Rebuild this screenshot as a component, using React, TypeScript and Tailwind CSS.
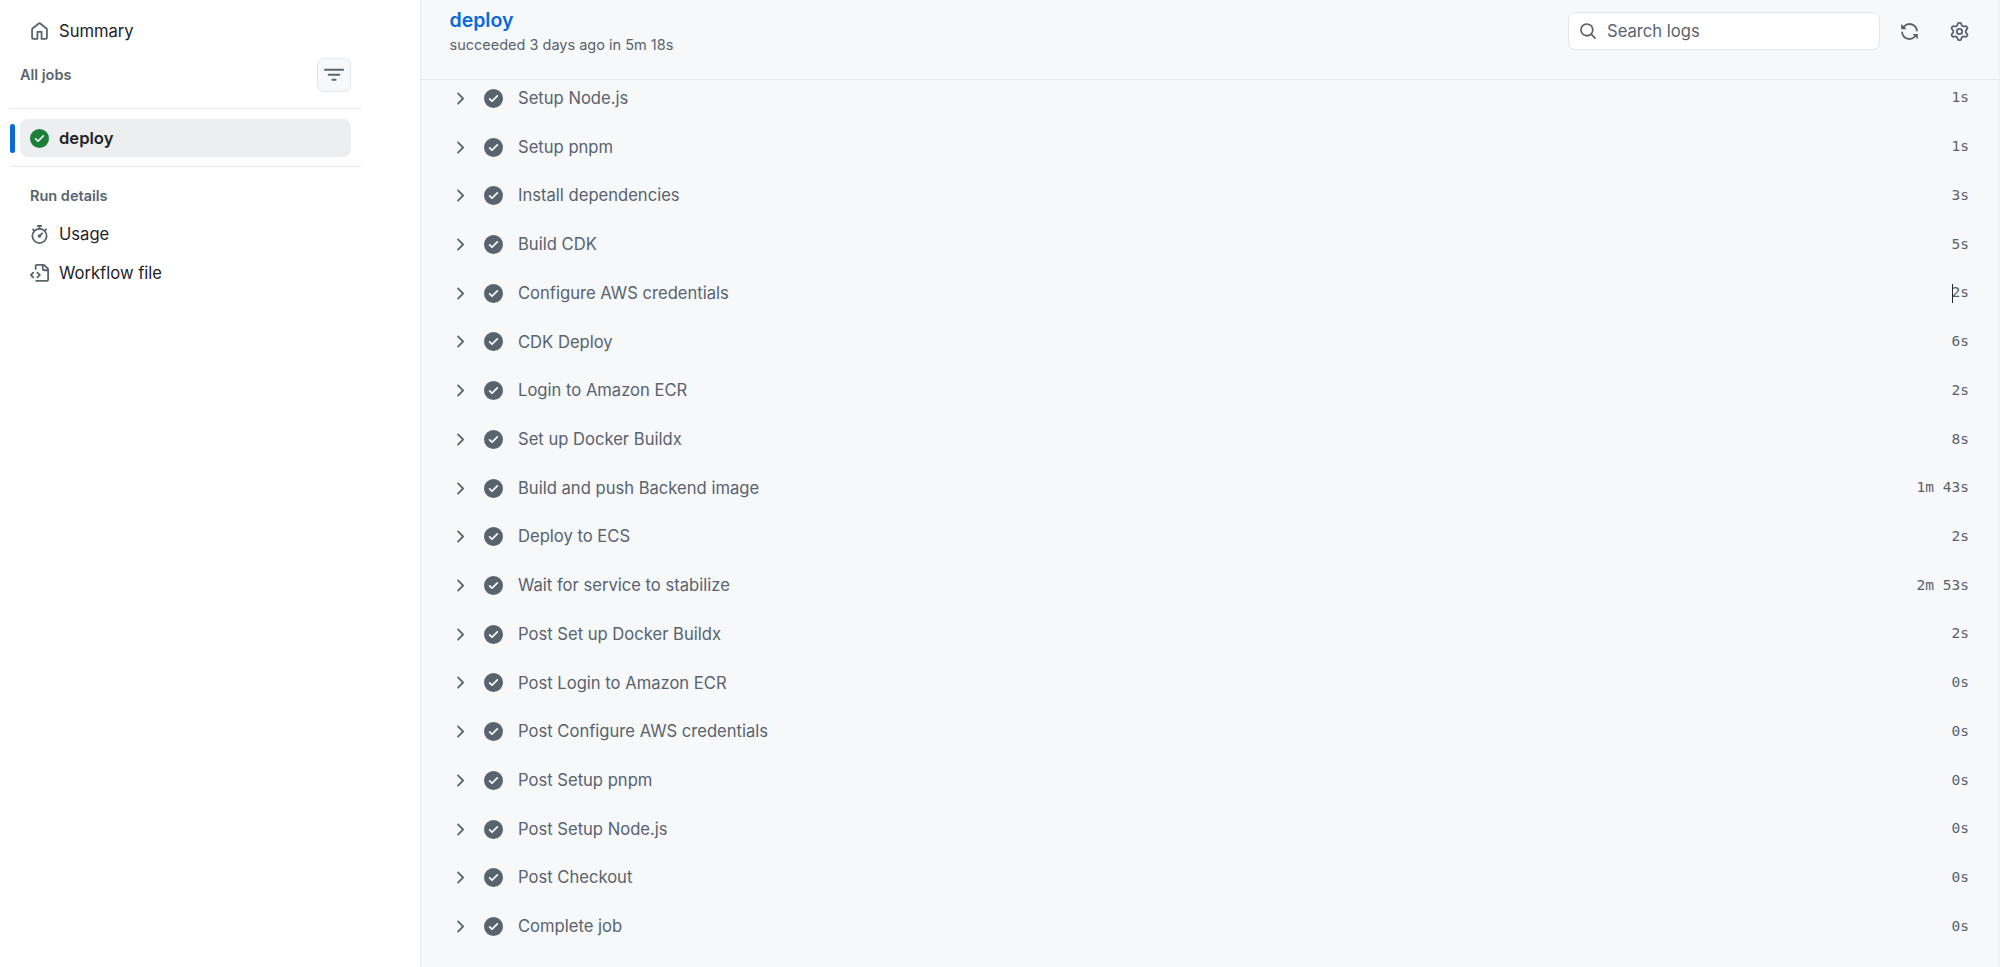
import React from 'react';

const icons: Record<string, React.ReactNode> = {
  home: <path d="M6.906.664a1.749 1.749 0 0 1 2.187 0l5.25 4.2c.415.332.657.835.657 1.367v7.019A1.75 1.75 0 0 1 13.25 15h-3.5a.75.75 0 0 1-.75-.75V9H7v5.25a.75.75 0 0 1-.75.75h-3.5A1.75 1.75 0 0 1 1 13.25V6.23c0-.531.242-1.034.657-1.366l5.25-4.2Zm1.25 1.171a.25.25 0 0 0-.312 0l-5.25 4.2a.25.25 0 0 0-.094.196v7.019c0 .138.112.25.25.25H5.5V8.25a.75.75 0 0 1 .75-.75h3.5a.75.75 0 0 1 .75.75v5.25h2.75a.25.25 0 0 0 .25-.25V6.23a.25.25 0 0 0-.094-.195Z" />,
  check: <path d="M8 16A8 8 0 1 1 8 0a8 8 0 0 1 0 16Zm3.78-9.72a.751.751 0 0 0-.018-1.042.751.751 0 0 0-1.042-.018L6.75 9.19 5.28 7.72a.751.751 0 0 0-1.042.018.751.751 0 0 0-.018 1.042l2 2a.75.75 0 0 0 1.06 0Z" />,
  stopwatch: <path d="M5.75.75A.75.75 0 0 1 6.5 0h3a.75.75 0 0 1 0 1.5h-.75v1l-.001.041a6.724 6.724 0 0 1 3.464 1.435l.007-.006.75-.75a.749.749 0 0 1 1.275.326.749.749 0 0 1-.215.734l-.75.75-.006.007a6.75 6.75 0 1 1-10.548 0L2.72 5.03l-.75-.75a.751.751 0 0 1 .018-1.042.751.751 0 0 1 1.042-.018l.75.75.007.006A6.72 6.72 0 0 1 7.25 2.541V1.5H6.5a.75.75 0 0 1-.75-.75ZM8 14.5a5.25 5.25 0 1 0-.001-10.501A5.25 5.25 0 0 0 8 14.5Zm.389-6.7 1.33-1.33a.75.75 0 1 1 1.061 1.06L9.45 8.861A1.503 1.503 0 0 1 8 10.75a1.499 1.499 0 1 1 .389-2.95Z" />,
  fileCode: <path d="M4 1.75C4 .784 4.784 0 5.75 0h5.586c.464 0 .909.184 1.237.513l2.914 2.914c.329.328.513.773.513 1.237v8.586A1.75 1.75 0 0 1 14.25 15h-9a.75.75 0 0 1 0-1.5h9a.25.25 0 0 0 .25-.25V6h-2.75A1.75 1.75 0 0 1 10 4.25V1.5H5.75a.25.25 0 0 0-.25.25v2.5a.75.75 0 0 1-1.5 0Zm1.72 4.97a.75.75 0 0 1 1.06 0l2 2a.75.75 0 0 1 0 1.06l-2 2a.749.749 0 0 1-1.275-.326.749.749 0 0 1 .215-.734l1.47-1.47-1.47-1.47a.75.75 0 0 1 0-1.06ZM3.28 7.78 1.81 9.25l1.47 1.47a.751.751 0 0 1-.018 1.042.751.751 0 0 1-1.042.018l-2-2a.75.75 0 0 1 0-1.06l2-2a.751.751 0 0 1 1.042.018.751.751 0 0 1 .018 1.042Zm8.22-6.218V4.25c0 .138.112.25.25.25h2.688l-.011-.013-2.914-2.914-.013-.011Z" />,
  filter: <path d="M.75 3h14.5a.75.75 0 0 1 0 1.5H.75a.75.75 0 0 1 0-1.5ZM3 7.75A.75.75 0 0 1 3.75 7h8.5a.75.75 0 0 1 0 1.5h-8.5A.75.75 0 0 1 3 7.75Zm3 4a.75.75 0 0 1 .75-.75h2.5a.75.75 0 0 1 0 1.5h-2.5a.75.75 0 0 1-.75-.75Z" />,
  sync: <path d="M1.705 8.005a.75.75 0 0 1 .834.656 5.5 5.5 0 0 0 9.592 2.97l-1.204-1.204a.25.25 0 0 1 .177-.427h3.646a.25.25 0 0 1 .25.25v3.646a.25.25 0 0 1-.427.177l-1.38-1.38A7.002 7.002 0 0 1 1.05 8.84a.75.75 0 0 1 .656-.834ZM8 2.5a5.487 5.487 0 0 0-4.131 1.869l1.204 1.204A.25.25 0 0 1 4.896 6H1.25A.25.25 0 0 1 1 5.75V2.104a.25.25 0 0 1 .427-.177l1.38 1.38A7.002 7.002 0 0 1 14.95 7.16a.75.75 0 0 1-1.49.178A5.5 5.5 0 0 0 8 2.5Z" />,
  gear: <path d="M8 0a8.2 8.2 0 0 1 .701.031C9.444.095 9.99.645 10.16 1.29l.288 1.107c.018.066.079.158.212.224.231.114.454.243.668.386.123.082.233.09.299.071l1.103-.303c.644-.176 1.392.021 1.82.63.27.385.506.792.704 1.218.315.675.111 1.422-.364 1.891l-.814.806c-.049.048-.098.147-.088.294.016.257.016.515 0 .772-.01.147.038.246.088.294l.814.806c.475.469.679 1.216.364 1.891a7.977 7.977 0 0 1-.704 1.217c-.428.61-1.176.807-1.82.63l-1.102-.302c-.067-.019-.177-.011-.3.071a5.909 5.909 0 0 1-.668.386c-.133.066-.194.158-.211.224l-.29 1.106c-.168.646-.715 1.196-1.458 1.26a8.006 8.006 0 0 1-1.402 0c-.743-.064-1.289-.614-1.458-1.26l-.289-1.106c-.018-.066-.079-.158-.212-.224a5.738 5.738 0 0 1-.668-.386c-.123-.082-.233-.09-.299-.071l-1.103.303c-.644.176-1.392-.021-1.82-.63a8.12 8.12 0 0 1-.704-1.218c-.315-.675-.111-1.422.363-1.891l.815-.806c.05-.048.098-.147.088-.294a6.214 6.214 0 0 1 0-.772c.01-.147-.038-.246-.088-.294l-.815-.806C.635 6.045.431 5.298.746 4.623a7.92 7.92 0 0 1 .704-1.217c.428-.61 1.176-.807 1.82-.63l1.102.302c.067.019.177.011.3-.071.214-.143.437-.272.668-.386.133-.066.194-.158.211-.224l.29-1.106C6.009.645 6.556.095 7.299.03 7.53.01 7.764 0 8 0Zm-.571 1.525c-.036.003-.108.036-.137.146l-.289 1.105c-.147.561-.549.967-.998 1.189-.173.086-.34.183-.5.29-.417.278-.97.423-1.529.27l-1.103-.303c-.109-.03-.175.016-.195.045-.22.312-.412.644-.573.99-.014.031-.021.11.059.19l.815.806c.411.406.562.957.53 1.456a4.709 4.709 0 0 0 0 .582c.032.499-.119 1.05-.53 1.456l-.815.806c-.081.08-.073.159-.059.19.162.346.353.677.573.989.02.03.085.076.195.046l1.102-.303c.56-.153 1.113-.008 1.53.27.161.107.328.204.501.29.447.222.85.629.997 1.189l.289 1.105c.029.109.101.143.137.146a6.6 6.6 0 0 0 1.142 0c.036-.003.108-.036.137-.146l.289-1.105c.147-.561.549-.967.998-1.189.173-.086.34-.183.5-.29.417-.278.97-.423 1.529-.27l1.103.303c.109.029.175-.016.195-.045.22-.313.411-.644.573-.99.014-.031.021-.11-.059-.19l-.815-.806c-.411-.406-.562-.957-.53-1.456a4.709 4.709 0 0 0 0-.582c-.032-.499.119-1.05.53-1.456l.815-.806c.081-.08.073-.159.059-.19a6.464 6.464 0 0 0-.573-.989c-.02-.03-.085-.076-.195-.046l-1.102.303c-.56.153-1.113.008-1.53-.27a4.44 4.44 0 0 0-.501-.29c-.447-.222-.85-.629-.997-1.189l-.289-1.105c-.029-.11-.101-.143-.137-.146a6.6 6.6 0 0 0-1.142 0ZM11 8a3 3 0 1 1-6 0 3 3 0 0 1 6 0ZM9.5 8a1.5 1.5 0 1 0-3.001.001A1.5 1.5 0 0 0 9.5 8Z" />,
  search: <path d="M10.68 11.74a6 6 0 0 1-7.922-8.982 6 6 0 0 1 8.982 7.922l3.04 3.04a.749.749 0 0 1-.326 1.275.749.749 0 0 1-.734-.215ZM11.5 7a4.499 4.499 0 1 0-8.997 0A4.499 4.499 0 0 0 11.5 7Z" />,
  chevron: <path d="M6.22 3.22a.75.75 0 0 1 1.06 0l4.25 4.25a.75.75 0 0 1 0 1.06l-4.25 4.25a.751.751 0 0 1-1.042-.018.751.751 0 0 1-.018-1.042L9.94 8 6.22 4.28a.75.75 0 0 1 0-1.06Z" />,
};

const Icon = ({ name, className }: { name: string; className: string }) => (
  <svg viewBox="0 0 16 16" fill="currentColor" className={className}>
    {icons[name]}
  </svg>
);

const steps = [
  ['Setup Node.js', '1s'],
  ['Setup pnpm', '1s'],
  ['Install dependencies', '3s'],
  ['Build CDK', '5s'],
  ['Configure AWS credentials', '2s'],
  ['CDK Deploy', '6s'],
  ['Login to Amazon ECR', '2s'],
  ['Set up Docker Buildx', '8s'],
  ['Build and push Backend image', '1m 43s'],
  ['Deploy to ECS', '2s'],
  ['Wait for service to stabilize', '2m 53s'],
  ['Post Set up Docker Buildx', '2s'],
  ['Post Login to Amazon ECR', '0s'],
  ['Post Configure AWS credentials', '0s'],
  ['Post Setup pnpm', '0s'],
  ['Post Setup Node.js', '0s'],
  ['Post Checkout', '0s'],
  ['Complete job', '0s'],
];

const NavLink = ({ icon, label, className }: { icon: string; label: string; className: string }) => (
  <div className={`flex items-center gap-[10px] pl-[30px] text-[16.6px] text-[#1f2328] ${className}`}>
    <Icon name={icon} className="w-[19px] h-[19px] text-[#59636e]" />
    <span>{label}</span>
  </div>
);

export default function App() {
  return (
    <div className="flex h-[967px] overflow-hidden bg-white font-['Inter','Liberation_Sans',sans-serif]">
      {/* sidebar */}
      <aside className="w-[421px] shrink-0 border-r border-[#e6eaef] bg-white pt-[16px]">
        <NavLink icon="home" label="Summary" className="h-[30px]" />
        <div className="flex items-center justify-between pl-[20px] pr-[69px] mt-[12px] h-[34px]">
          <span className="text-[14.5px] font-semibold text-[#59636e]">All jobs</span>
          <button className="w-[34px] h-[34px] flex items-center justify-center rounded-[7px] border border-[#e3e7ec] bg-[#f6f8fa]">
            <Icon name="filter" className="w-[20px] h-[20px] text-[#59636e]" />
          </button>
        </div>
        <div className="mx-[10px] w-[351px] mt-[16px] border-t border-[#e6eaef]" />
        <div className="relative ml-[20px] w-[331px] mt-[10px] h-[38px] flex items-center gap-[10px] pl-[10px] rounded-[8px] bg-[#eceef0]">
          <div className="absolute left-[-10px] top-[5px] w-[5px] h-[29px] rounded-[3px] bg-[#0969da]" />
          <Icon name="check" className="w-[19px] h-[19px] text-[#1a7f37]" />
          <span className="text-[16.6px] font-semibold text-[#1f2328]">deploy</span>
        </div>
        <div className="mx-[10px] w-[351px] mt-[9px] border-t border-[#e6eaef]" />
        <div className="pl-[30px] mt-[18px] text-[14.5px] font-semibold text-[#59636e]">Run details</div>
        <NavLink icon="stopwatch" label="Usage" className="h-[39px] mt-[8px]" />
        <NavLink icon="fileCode" label="Workflow file" className="h-[39px]" />
      </aside>

      {/* job */}
      <main className="flex-1 min-w-0 overflow-hidden border-r border-[#eef0f3] bg-[#f6f8fa]">
        <header className="flex h-[80px] items-start justify-between border-b border-[#e6eaef] pl-[28.5px] pr-[30px]">
          <div className="pt-[7px]">
            <h1 className="text-[19.5px] font-semibold leading-[26px] text-[#0969da]">deploy</h1>
            <p className="text-[14.5px] leading-[20px] mt-[2px] text-[#59636e]">succeeded 3 days ago in 5m 18s</p>
          </div>
          <div className="flex items-center pt-[12px]">
            <div className="flex items-center w-[312px] h-[38px] rounded-[7px] border border-[#e3e7ec] bg-white pl-[10px] gap-[10px]">
              <Icon name="search" className="w-[18px] h-[18px] text-[#59636e]" />
              <span className="text-[16.6px] text-[#59636e]">Search logs</span>
            </div>
            <Icon name="sync" className="w-[19px] h-[19px] ml-[20px] text-[#59636e]" />
            <Icon name="gear" className="w-[19px] h-[19px] ml-[31px] text-[#59636e]" />
          </div>
        </header>
        <div className="-mt-[6px]">
          {steps.map(([name, time]) => (
            <div key={name} className="flex items-center h-[48.72px] pl-[29px] pr-[30px] text-[#59636e]">
              <Icon name="chevron" className="w-[19px] h-[19px] mr-[15px]" />
              <Icon name="check" className="w-[19px] h-[19px] mr-[15px] text-[#59636e]" />
              <span className="flex-1 text-[16.6px]">{name}</span>
              <span className="relative text-[14.5px] font-['DejaVu_Sans_Mono',monospace]">
                {name === 'Configure AWS credentials' && (
                  <span className="absolute left-0 top-[1.5px] h-[19px] w-px bg-[#24292f]" />
                )}
                {time}
              </span>
            </div>
          ))}
        </div>
      </main>
    </div>
  );
}
